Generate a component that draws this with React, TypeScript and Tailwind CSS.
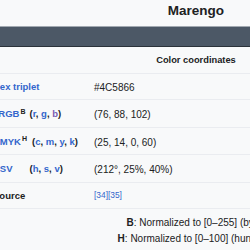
import React from 'react';

const link = 'text-[#3366cc]';
const visited = 'text-[#795cb2]';

function Row({ h, label, value }: { h: string; label: React.ReactNode; value: React.ReactNode }) {
  return (
    <div className={`flex items-center border-t border-[#eaecf0] pt-[2px] ${h}`}>
      <div className="w-[105px] shrink-0 pl-[4px] text-[9.5px] font-bold whitespace-nowrap">{label}</div>
      <div className="text-[10px] whitespace-nowrap">{value}</div>
    </div>
  );
}

export default function App() {
  return (
    <div
      className="w-[250px] h-[250px] overflow-hidden bg-[#f8f9fa] text-[#202122]"
      style={{ fontFamily: '"Liberation Sans", Arial, sans-serif' }}
    >
      <div className="ml-[-11px] w-[414px]">
        {/* Title */}
        <div className="h-[26px] pb-[3px] flex items-center justify-center text-[13.5px] font-bold">
          Marengo
        </div>

        {/* Colour swatch */}
        <div className="h-[21px] bg-[#4c5866] border-t border-b border-t-[#a2a9b1] border-b-[#2b323a]" />

        {/* Section header */}
        <div className="h-[26px] pt-[2px] flex items-center justify-center text-[9.3px] font-bold">
          Color coordinates
        </div>

        <Row h="h-[26px]" label={<span className={link}>Hex triplet</span>} value="#4C5866" />
        <Row
          h="h-[28px]"
          label={
            <>
              <span className={link}>sRGB</span>
              <sup className="text-[7px] ml-[1px]">B</sup>
              <span className="ml-[4px]">
                (<span className={link}>r</span>, <span className={link}>g</span>, <span className={visited}>b</span>)
              </span>
            </>
          }
          value="(76, 88, 102)"
        />
        <Row
          h="h-[27px]"
          label={
            <>
              <span className={link}>CMYK</span>
              <sup className="text-[7px] ml-[1px]">H</sup>
              <span className="ml-[5px]">
                (<span className={link}>c</span>, <span className={link}>m</span>, <span className={link}>y</span>,{' '}
                <span className={link}>k</span>)
              </span>
            </>
          }
          value="(25, 14, 0, 60)"
        />
        <Row
          h="h-[28px]"
          label={
            <>
              <span className={link}>HSV</span>
              <span className="ml-[17px]">
                (<span className={link}>h</span>, <span className={link}>s</span>, <span className={link}>v</span>)
              </span>
            </>
          }
          value="(212°, 25%, 40%)"
        />
        <Row
          h="h-[26px]"
          label="Source"
          value={
            <span className={`${link} text-[8.4px] relative top-[-2px]`}>[34][35]</span>
          }
        />

        {/* Footnotes */}
        <div className="border-t border-[#eaecf0] pt-[6px] text-[10px] leading-[16px] text-center whitespace-nowrap">
          <div>
            <b>B</b>: Normalized to [0–255] (byte)
          </div>
          <div>
            <b>H</b>: Normalized to [0–100] (hundred)
          </div>
        </div>
      </div>
    </div>
  );
}
